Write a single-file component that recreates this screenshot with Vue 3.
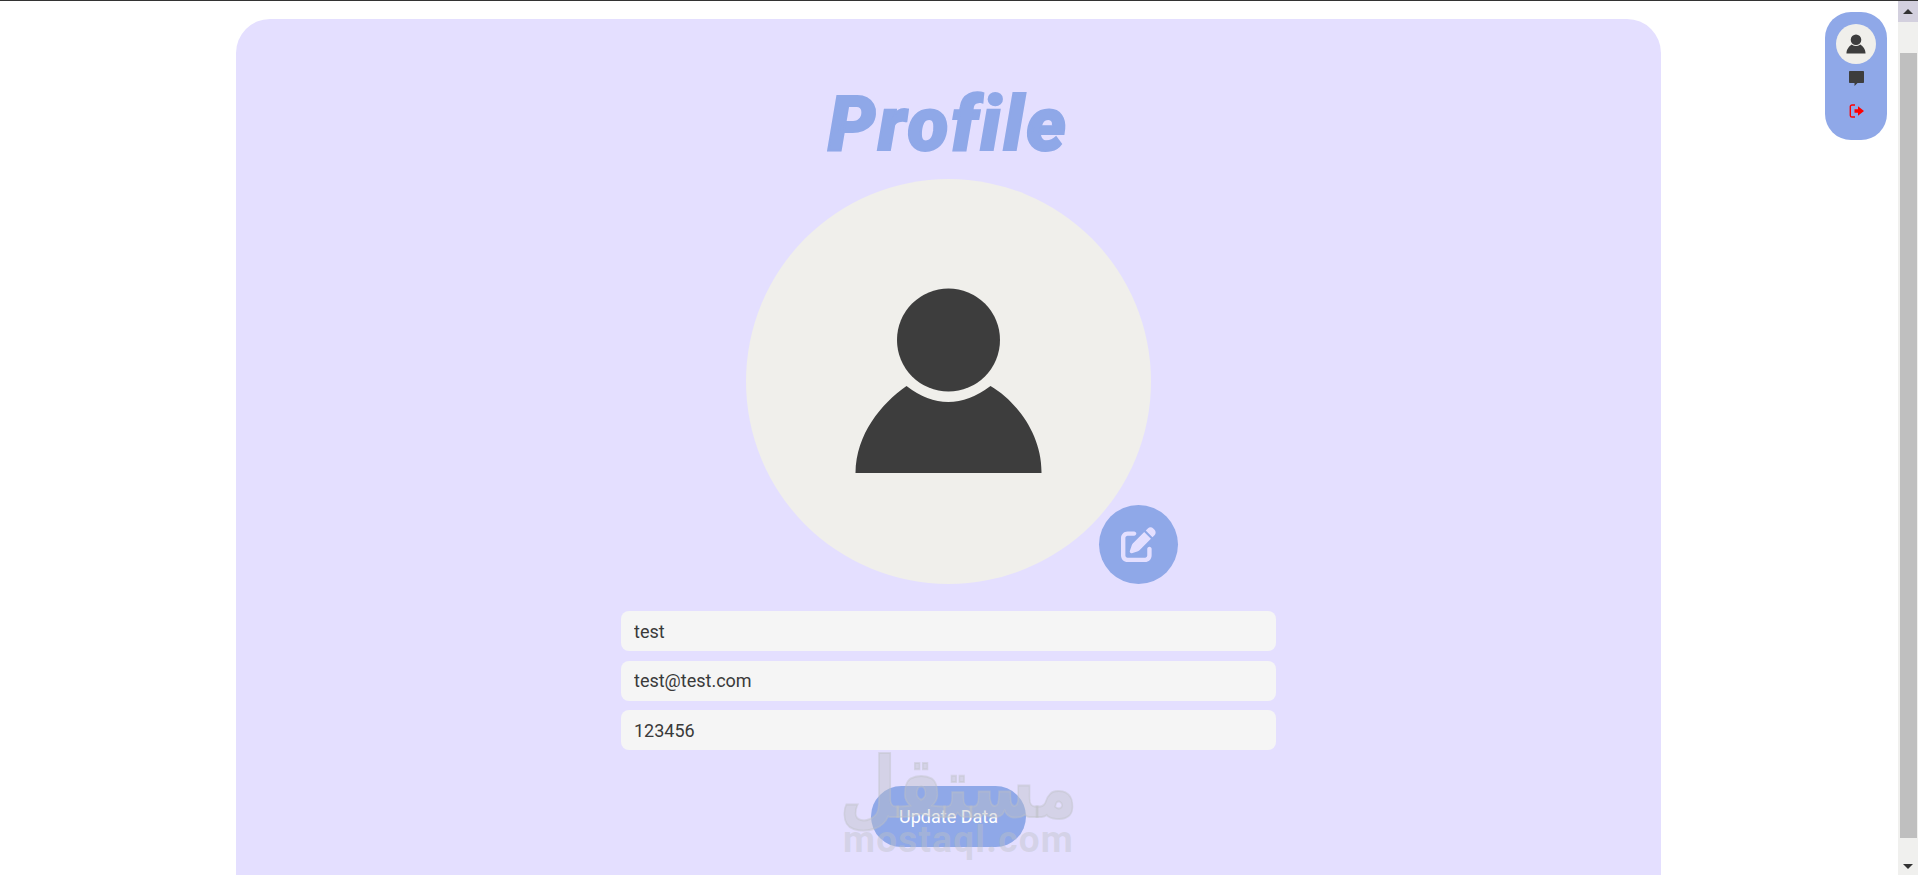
<script setup>
const fields = ['test', 'test@test.com', '123456']
const body = 'M109.5 294C110 255 135 225 160.5 207Q202 239 244.5 207C270 222 296 255 295.5 294Z'
</script>

<template>
  <div class="shell">
    <main class="page">
      <section class="card">
        <h1 class="title">Profile</h1>
        <div class="avatar">
          <svg class="person" viewBox="0 0 405 405">
            <circle cx="202.5" cy="161" r="51.5" />
            <path :d="body" />
          </svg>
          <button class="edit" aria-label="Edit photo">
            <svg viewBox="0 0 512 512"><path d="M471.6 21.7c-21.9-21.9-57.3-21.9-79.2 0L362.3 51.7l97.9 97.9 30.1-30.1c21.9-21.9 21.9-57.3 0-79.2L471.6 21.7zm-299.2 220c-6.1 6.1-10.8 13.6-13.5 21.9l-29.6 88.8c-2.9 8.6-.6 18.1 5.8 24.6s15.9 8.7 24.6 5.8l88.8-29.6c8.2-2.7 15.7-7.4 21.9-13.5L437.7 172.3 339.7 74.3 172.4 241.7zM96 64C43 64 0 107 0 160V416c0 53 43 96 96 96H352c53 0 96-43 96-96V320c0-17.7-14.3-32-32-32s-32 14.3-32 32v96c0 17.7-14.3 32-32 32H96c-17.7 0-32-14.3-32-32V160c0-17.7 14.3-32 32-32h96c17.7 0 32-14.3 32-32s-14.3-32-32-32H96z" /></svg>
          </button>
        </div>
        <form class="form" @submit.prevent>
          <input v-for="f in fields" :key="f" class="field" :value="f" />
          <button class="submit">Update Data</button>
        </form>
        <div class="mark">
          <div class="mark-ar">مستقل</div>
          <div class="mark-en">mostaql.com</div>
        </div>
      </section>
      <nav class="float-nav">
        <span class="nav-avatar">
          <svg viewBox="105 105 195 195"><circle cx="202.5" cy="161" r="51.5" /><path :d="body" /></svg>
        </span>
        <svg class="nav-chat" viewBox="0 0 15 15"><path d="M1 0H14C14.6 0 15 .4 15 1V11C15 11.6 14.6 12 14 12H8.5L5.5 15V12H1C.4 12 0 11.6 0 11V1C0 .4 .4 0 1 0Z" /></svg>
        <svg class="nav-out" viewBox="0 0 15 14">
          <path class="bracket" d="M6 1H3C2 1 1.3 1.6 1.3 2.6V11.4C1.3 12.4 2 13 3 13H6" />
          <path d="M5.5 5.3H9V2.3L15 7L9 11.7V8.7H5.5Z" />
        </svg>
      </nav>
    </main>
    <aside class="scrollbar">
      <div class="sb-btn"><i class="arrow up"></i></div>
      <div class="sb-track"><div class="sb-thumb"></div></div>
      <div class="sb-end"><i class="arrow down"></i></div>
    </aside>
  </div>
</template>

<style>
html, body { margin: 0; overflow: hidden; background: #fff; }
</style>

<style scoped>
.shell {
  display: flex;
  height: 875px;
  box-sizing: border-box;
  border-top: 1px solid #333;
  overflow: hidden;
  font-family: Roboto, "Liberation Sans", sans-serif;
}
.page {
  position: relative;
  flex: 1;
  min-width: 0;
}
.card {
  position: relative;
  box-sizing: border-box;
  width: 1425px;
  height: 900px;
  margin: 18px 0 0 236px;
  padding-top: 64px;
  background: #e4dfff;
  border-radius: 34px 34px 0 0;
  display: flex;
  flex-direction: column;
  align-items: center;
}
.title {
  margin: 0 0 14px;
  height: 82px;
  line-height: 82px;
  font-family: Roboto, sans-serif;
  font-weight: 900;
  font-style: italic;
  font-size: 75px;
  letter-spacing: 2.9px;
  -webkit-text-stroke: 2px #8fa8e8;
  color: #8fa8e8;
}
.avatar {
  position: relative;
  width: 405px;
  height: 405px;
  border-radius: 50%;
  background: #f0efeb;
  flex: none;
}
.person {
  display: block;
  width: 100%;
  height: 100%;
  fill: #3d3d3d;
}
.edit {
  position: absolute;
  right: -27px;
  bottom: 0;
  width: 79px;
  height: 79px;
  padding: 0;
  border: 0;
  border-radius: 50%;
  background: #8fa8e8;
  display: flex;
  align-items: center;
  justify-content: center;
}
.edit svg {
  width: 35px;
  height: 35px;
  fill: #e4dfff;
}
.form {
  width: 655px;
  margin-top: 27px;
  display: flex;
  flex-direction: column;
  align-items: center;
  gap: 9.5px;
}
.field {
  box-sizing: border-box;
  width: 100%;
  height: 40px;
  padding: 0 13px;
  border: 0;
  border-radius: 8px;
  background: #f5f5f5;
  color: #3a3a3a;
  font-family: Roboto, sans-serif;
  font-size: 18px;
  outline: none;
}
.submit {
  width: 155px;
  height: 61px;
  margin-top: 26.5px;
  border: 0;
  border-radius: 31px;
  background: #8fa8e8;
  color: #fff;
  font-family: Roboto, sans-serif;
  font-size: 18px;
}
.mark {
  position: absolute;
  left: 609px;
  top: 733px;
  width: 227px;
  color: rgba(190, 193, 197, 0.42);
  pointer-events: none;
  white-space: nowrap;
}
.mark-ar {
  height: 70px;
  line-height: 70px;
  display: flex;
  justify-content: center;
  font-family: "DejaVu Sans", sans-serif;
  font-weight: 700;
  font-size: 65px;
  -webkit-text-stroke: 1.5px rgba(190, 193, 197, 0.42);
  transform: translateY(1px) scaleY(1.3);
}
.mark-en {
  height: 36px;
  line-height: 36px;
  display: flex;
  justify-content: center;
  font-family: Roboto, sans-serif;
  font-weight: 700;
  font-size: 37px;
  letter-spacing: 1.2px;
}
.float-nav {
  position: absolute;
  top: 11px;
  left: 1825px;
  box-sizing: border-box;
  width: 62px;
  height: 128px;
  padding-top: 12px;
  border-radius: 26px;
  background: #8fa8e8;
  display: flex;
  flex-direction: column;
  align-items: center;
}
.nav-avatar {
  width: 40px;
  height: 40px;
  border-radius: 50%;
  background: #f0efeb;
  display: flex;
  align-items: center;
  justify-content: center;
}
.nav-avatar svg {
  width: 20px;
  height: 20px;
  fill: #3d3d3d;
}
.nav-chat {
  width: 15px;
  height: 15px;
  margin-top: 7px;
  fill: #3d3d3d;
}
.nav-out {
  width: 15px;
  height: 14px;
  margin-top: 18px;
  fill: #f00;
}
.bracket {
  fill: none;
  stroke: #f00;
  stroke-width: 1.4;
}
.scrollbar {
  flex: none;
  width: 20px;
  display: flex;
  flex-direction: column;
  background: #f0f0ee;
}
.sb-btn {
  height: 21px;
  background: #d3d0de;
  display: flex;
  align-items: center;
  justify-content: center;
}
.sb-track {
  flex: 1;
  padding: 31px 1px 37px 2px;
  display: flex;
}
.sb-thumb {
  flex: 1;
  background: #bfbfbf;
}
.sb-end {
  height: 0;
  position: relative;
}
.sb-end .arrow {
  position: absolute;
  left: 5px;
  top: -11px;
}
.arrow {
  width: 0;
  height: 0;
  border-left: 5px solid transparent;
  border-right: 5px solid transparent;
}
.arrow.up { border-bottom: 5px solid #333; }
.arrow.down { border-top: 5px solid #333; }
</style>
